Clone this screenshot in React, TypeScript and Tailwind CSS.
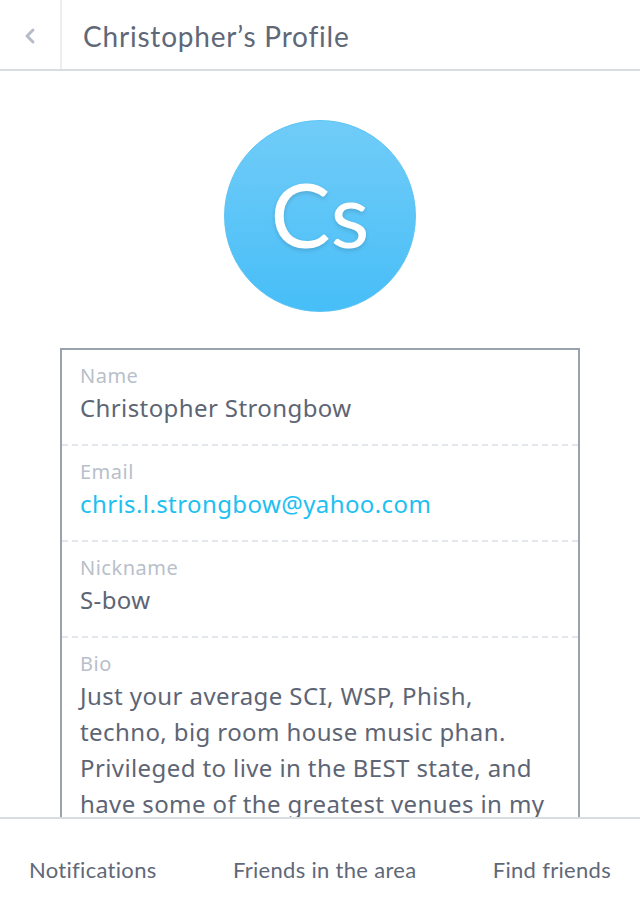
import { ChevronLeft } from "lucide-react";

const fields = [
  { label: "Name", value: "Christopher Strongbow" },
  { label: "Email", value: "chris.l.strongbow@yahoo.com", link: true },
  { label: "Nickname", value: "S-bow" },
];

const bio = [
  "Just your average SCI, WSP, Phish,",
  "techno, big room house music phan.",
  "Privileged to live in the BEST state, and",
  "have some of the greatest venues in my",
  "backyard.",
];

export default function App() {
  return (
    <div
      className="relative h-[920px] w-[640px] overflow-hidden bg-white text-[#5d6574]"
      style={{ fontFamily: "'Noto Sans', Lato, sans-serif" }}
    >
      <header className="flex h-[71px] items-stretch border-b-2 border-[#d9dde2] bg-white">
        <div className="flex w-[62px] items-center justify-center border-r-2 border-[#eceef1] pt-[3px]">
          <ChevronLeft className="h-6 w-6 text-[#b6bdc8]" strokeWidth={3} />
        </div>
        <h1
          className="flex items-center pl-[21px] pt-[3px] text-[28px] tracking-[0.8px] text-[#5f6878]"
          style={{ fontFamily: "Lato, sans-serif" }}
        >
          Christopher’s Profile
        </h1>
      </header>

      <main className="flex flex-col items-center">
        <div className="mt-[49px] flex h-[192px] w-[192px] items-center justify-center rounded-full border border-[#5cc4f3] bg-gradient-to-b from-[#70ccf8] to-[#46bef7]">
          <span
            className="pb-[6px] text-[90px] leading-none text-white [text-shadow:0_2px_4px_rgba(0,0,0,0.15)]"
            style={{ fontFamily: "Lato, sans-serif" }}
          >
            Cs
          </span>
        </div>

        <section className="mt-[36px] w-[520px] border-2 border-[#9aa2ad]">
          {fields.map((f) => (
            <div
              key={f.label}
              className="h-[96px] border-b-2 border-dashed border-[#e3e6ea] px-[18px] pt-[12px]"
            >
              <div className="text-[20px] leading-[28px] tracking-[0.5px] text-[#b8bfca]">
                {f.label}
              </div>
              <div
                className={`text-[24px] leading-[36px] tracking-[0.4px] ${f.link ? "text-[#1cc0f1]" : "text-[#5d6574]"}`}
              >
                {f.value}
              </div>
            </div>
          ))}
          <div className="px-[18px] pt-[12px] pb-10">
            <div className="text-[20px] leading-[28px] tracking-[0.5px] text-[#b8bfca]">Bio</div>
            <p className="text-[24px] leading-[36px] tracking-[0.4px] text-[#5d6574]">
              {bio.map((line) => (
                <span key={line} className="block whitespace-nowrap">
                  {line}
                </span>
              ))}
            </p>
          </div>
        </section>
      </main>

      <nav
        className="absolute bottom-0 left-0 flex h-[103px] w-full items-center justify-between border-t-2 border-[#d9dde2] bg-white px-[29px] text-[22px] tracking-[0.3px] text-[#5f6878]"
        style={{ fontFamily: "Lato, sans-serif" }}
      >
        <span>Notifications</span>
        <span>Friends in the area</span>
        <span>Find friends</span>
      </nav>
    </div>
  );
}
